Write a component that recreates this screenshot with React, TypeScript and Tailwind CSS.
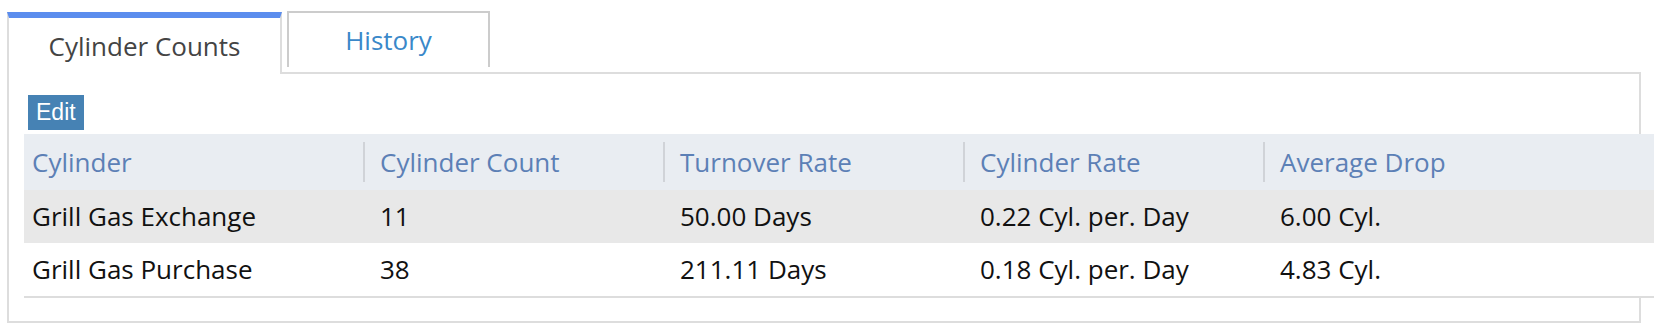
import React from 'react';

const columns = ['Cylinder', 'Cylinder Count', 'Turnover Rate', 'Cylinder Rate', 'Average Drop'];

const rows = [
  ['Grill Gas Exchange', '11', '50.00 Days', '0.22 Cyl. per. Day', '6.00 Cyl.'],
  ['Grill Gas Purchase', '38', '211.11 Days', '0.18 Cyl. per. Day', '4.83 Cyl.'],
];

const colWidths = ['w-[339px]', 'w-[300px]', 'w-[300px]', 'w-[300px]', 'w-[420px]'];

export default function App() {
  return (
    <div className="w-[1654px] h-[334px] overflow-hidden bg-white pl-[7px] pt-[11px] font-['Open_Sans',sans-serif]">
      {/* Tabs */}
      <div className="flex items-start h-[63px]">
        <div className="relative z-10 mt-[1px] w-[275px] h-[62px] bg-white border-t-[6px] border-t-[#5b8dee] border-x-2 border-x-[#dddddd] flex items-center justify-center text-[26px] text-[#444444]">
          Cylinder Counts
        </div>
        <div className="ml-[5px] w-[203px] h-[56px] border-2 border-b-0 border-[#cccccc] flex items-center justify-center text-[26px] text-[#3a88c9]">
          History
        </div>
      </div>

      {/* Panel */}
      <div className="-mt-[2px] w-[1634px] h-[251px] border-2 border-[#dddddd] pt-[21px]">
        <button className="ml-[19px] h-[35px] px-[8px] bg-[#4682b4] text-white text-[23px] leading-none font-['Liberation_Sans',Arial,sans-serif]">
          Edit
        </button>
        <div className="ml-[15px] mt-[4px] w-[1700px] border-b-2 border-[#dddddd]">
          <div className="flex h-[56px] bg-[#e9edf2] text-[#5c80b6] text-[26px]">
            {columns.map((c, i) => (
              <div key={c} className={`${colWidths[i]} flex items-center shrink-0 ${i === 0 ? 'pl-[8px]' : 'pl-[17px] relative'}`}>
                {i > 0 && <span className="absolute left-0 top-[8px] h-[40px] w-[2px] bg-[#d0d3d8]" />}
                {c}
              </div>
            ))}
          </div>
          {rows.map((r, ri) => (
            <div key={ri} className={`flex h-[53px] text-[26px] text-[#111111] ${ri === 0 ? 'bg-[#e8e8e8]' : 'bg-white'}`}>
              {r.map((v, i) => (
                <div key={i} className={`${colWidths[i]} flex items-center shrink-0 ${i === 0 ? 'pl-[8px]' : 'pl-[17px]'}`}>
                  {v}
                </div>
              ))}
            </div>
          ))}
        </div>
      </div>
    </div>
  );
}
